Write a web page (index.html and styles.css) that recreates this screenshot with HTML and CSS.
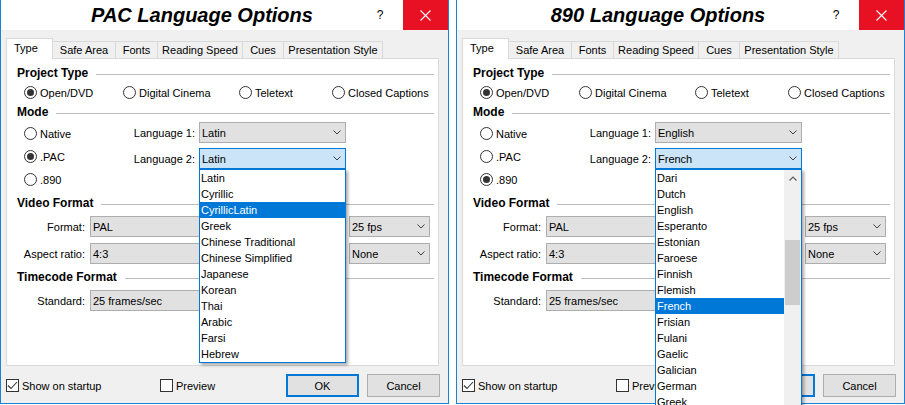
FILE: index.html
```html
<!DOCTYPE html>
<html>
<head>
<meta charset="utf-8">
<title>Language Options</title>
<link rel="stylesheet" href="styles.css">
</head>
<body>
<div class="screen">

  <!-- ===== PAC dialog ===== -->
  <div class="dialog">
    <div class="titlebar">
      <div class="tb-spacer"></div>
      <div class="tb-title">PAC Language Options</div>
      <div class="tb-help">?</div>
      <div class="tb-close"><svg width="11" height="11" viewBox="0 0 11 11"><path d="M0.5 0.5 L10.5 10.5 M10.5 0.5 L0.5 10.5" stroke="#fff" stroke-width="1.1" fill="none"/></svg></div>
    </div>
    <div class="dlg-body">
      <div class="tabs">
        <div class="tab tab-sel">Type</div>
        <div class="tab">Safe Area</div>
        <div class="tab">Fonts</div>
        <div class="tab">Reading Speed</div>
        <div class="tab">Cues</div>
        <div class="tab">Presentation Style</div>
      </div>
      <div class="panel">
        <div class="group-hd"><span>Project Type</span><i class="rule"></i></div>
        <div class="radio-row">
          <div class="radio r-open on"><span class="rb"></span>Open/DVD</div>
          <div class="radio r-dc"><span class="rb"></span>Digital Cinema</div>
          <div class="radio r-tt"><span class="rb"></span>Teletext</div>
          <div class="radio"><span class="rb"></span>Closed Captions</div>
        </div>
        <div class="group-hd"><span>Mode</span><i class="rule"></i></div>
        <div class="mode">
          <div class="mode-radios">
            <div class="radio"><span class="rb"></span>Native</div>
            <div class="radio on"><span class="rb"></span>.PAC</div>
            <div class="radio"><span class="rb"></span>.890</div>
          </div>
          <div class="mode-langs">
            <span class="lbl">Language 1:</span>
            <div class="combo"><span>Latin</span><svg class="chev" width="8" height="5" viewBox="0 0 8 5"><path d="M0.5 0.5 L4 4 L7.5 0.5" fill="none" stroke="#404040"/></svg></div>
            <span class="lbl">Language 2:</span>
            <div class="combo-wrap">
              <div class="combo focus"><span>Latin</span><svg class="chev" width="8" height="5" viewBox="0 0 8 5"><path d="M0.5 0.5 L4 4 L7.5 0.5" fill="none" stroke="#404040"/></svg></div>
              <div class="list">
                <div class="li">Latin</div>
                <div class="li">Cyrillic</div>
                <div class="li sel">CyrillicLatin</div>
                <div class="li">Greek</div>
                <div class="li">Chinese Traditional</div>
                <div class="li">Chinese Simplified</div>
                <div class="li">Japanese</div>
                <div class="li">Korean</div>
                <div class="li">Thai</div>
                <div class="li">Arabic</div>
                <div class="li">Farsi</div>
                <div class="li">Hebrew</div>
              </div>
            </div>
          </div>
        </div>
        <div class="group-hd"><span>Video Format</span><i class="rule"></i></div>
        <div class="vrow">
          <span class="lbl">Format:</span>
          <div class="combo"><span>PAL</span><svg class="chev" width="8" height="5" viewBox="0 0 8 5"><path d="M0.5 0.5 L4 4 L7.5 0.5" fill="none" stroke="#404040"/></svg></div>
          <div class="combo"><span>25 fps</span><svg class="chev" width="8" height="5" viewBox="0 0 8 5"><path d="M0.5 0.5 L4 4 L7.5 0.5" fill="none" stroke="#404040"/></svg></div>
        </div>
        <div class="vrow vrow2">
          <span class="lbl">Aspect ratio:</span>
          <div class="combo"><span>4:3</span><svg class="chev" width="8" height="5" viewBox="0 0 8 5"><path d="M0.5 0.5 L4 4 L7.5 0.5" fill="none" stroke="#404040"/></svg></div>
          <div class="combo"><span>None</span><svg class="chev" width="8" height="5" viewBox="0 0 8 5"><path d="M0.5 0.5 L4 4 L7.5 0.5" fill="none" stroke="#404040"/></svg></div>
        </div>
        <div class="group-hd gh-tc"><span>Timecode Format</span><i class="rule"></i></div>
        <div class="vrow">
          <span class="lbl">Standard:</span>
          <div class="combo"><span>25 frames/sec</span><svg class="chev" width="8" height="5" viewBox="0 0 8 5"><path d="M0.5 0.5 L4 4 L7.5 0.5" fill="none" stroke="#404040"/></svg></div>
        </div>
      </div>
      <div class="footer">
        <div class="chk chk-first"><span class="cb"><svg width="11" height="11" viewBox="0 0 11 11"><path d="M1 5.5 L4 8.5 L10 2" fill="none" stroke="#333" stroke-width="1.1"/></svg></span>Show on startup</div>
        <div class="chk"><span class="cb"></span>Preview</div>
        <div class="buttons">
          <div class="btn default">OK</div>
          <div class="btn">Cancel</div>
        </div>
      </div>
    </div>
  </div>

  <!-- ===== 890 dialog ===== -->
  <div class="dialog">
    <div class="titlebar">
      <div class="tb-spacer"></div>
      <div class="tb-title">890 Language Options</div>
      <div class="tb-help">?</div>
      <div class="tb-close"><svg width="11" height="11" viewBox="0 0 11 11"><path d="M0.5 0.5 L10.5 10.5 M10.5 0.5 L0.5 10.5" stroke="#fff" stroke-width="1.1" fill="none"/></svg></div>
    </div>
    <div class="dlg-body">
      <div class="tabs">
        <div class="tab tab-sel">Type</div>
        <div class="tab">Safe Area</div>
        <div class="tab">Fonts</div>
        <div class="tab">Reading Speed</div>
        <div class="tab">Cues</div>
        <div class="tab">Presentation Style</div>
      </div>
      <div class="panel">
        <div class="group-hd"><span>Project Type</span><i class="rule"></i></div>
        <div class="radio-row">
          <div class="radio r-open on"><span class="rb"></span>Open/DVD</div>
          <div class="radio r-dc"><span class="rb"></span>Digital Cinema</div>
          <div class="radio r-tt"><span class="rb"></span>Teletext</div>
          <div class="radio"><span class="rb"></span>Closed Captions</div>
        </div>
        <div class="group-hd"><span>Mode</span><i class="rule"></i></div>
        <div class="mode">
          <div class="mode-radios">
            <div class="radio"><span class="rb"></span>Native</div>
            <div class="radio"><span class="rb"></span>.PAC</div>
            <div class="radio on"><span class="rb"></span>.890</div>
          </div>
          <div class="mode-langs">
            <span class="lbl">Language 1:</span>
            <div class="combo"><span>English</span><svg class="chev" width="8" height="5" viewBox="0 0 8 5"><path d="M0.5 0.5 L4 4 L7.5 0.5" fill="none" stroke="#404040"/></svg></div>
            <span class="lbl">Language 2:</span>
            <div class="combo-wrap">
              <div class="combo focus"><span>French</span><svg class="chev" width="8" height="5" viewBox="0 0 8 5"><path d="M0.5 0.5 L4 4 L7.5 0.5" fill="none" stroke="#404040"/></svg></div>
              <div class="list list-scroll">
                <div class="items">
                  <div class="li">Dari</div>
                  <div class="li">Dutch</div>
                  <div class="li">English</div>
                  <div class="li">Esperanto</div>
                  <div class="li">Estonian</div>
                  <div class="li">Faroese</div>
                  <div class="li">Finnish</div>
                  <div class="li">Flemish</div>
                  <div class="li sel">French</div>
                  <div class="li">Frisian</div>
                  <div class="li">Fulani</div>
                  <div class="li">Gaelic</div>
                  <div class="li">Galician</div>
                  <div class="li">German</div>
                  <div class="li">Greek</div>
                  <div class="li">Gujarati</div>
                </div>
                <div class="sb">
                  <div class="sb-up"><svg width="8" height="5" viewBox="0 0 8 5"><path d="M0.5 4.5 L4 1 L7.5 4.5" fill="none" stroke="#606060" stroke-width="1.2"/></svg></div>
                  <div class="sb-thumb"></div>
                </div>
              </div>
            </div>
          </div>
        </div>
        <div class="group-hd"><span>Video Format</span><i class="rule"></i></div>
        <div class="vrow">
          <span class="lbl">Format:</span>
          <div class="combo"><span>PAL</span><svg class="chev" width="8" height="5" viewBox="0 0 8 5"><path d="M0.5 0.5 L4 4 L7.5 0.5" fill="none" stroke="#404040"/></svg></div>
          <div class="combo"><span>25 fps</span><svg class="chev" width="8" height="5" viewBox="0 0 8 5"><path d="M0.5 0.5 L4 4 L7.5 0.5" fill="none" stroke="#404040"/></svg></div>
        </div>
        <div class="vrow vrow2">
          <span class="lbl">Aspect ratio:</span>
          <div class="combo"><span>4:3</span><svg class="chev" width="8" height="5" viewBox="0 0 8 5"><path d="M0.5 0.5 L4 4 L7.5 0.5" fill="none" stroke="#404040"/></svg></div>
          <div class="combo"><span>None</span><svg class="chev" width="8" height="5" viewBox="0 0 8 5"><path d="M0.5 0.5 L4 4 L7.5 0.5" fill="none" stroke="#404040"/></svg></div>
        </div>
        <div class="group-hd gh-tc"><span>Timecode Format</span><i class="rule"></i></div>
        <div class="vrow">
          <span class="lbl">Standard:</span>
          <div class="combo"><span>25 frames/sec</span><svg class="chev" width="8" height="5" viewBox="0 0 8 5"><path d="M0.5 0.5 L4 4 L7.5 0.5" fill="none" stroke="#404040"/></svg></div>
        </div>
      </div>
      <div class="footer">
        <div class="chk chk-first"><span class="cb"><svg width="11" height="11" viewBox="0 0 11 11"><path d="M1 5.5 L4 8.5 L10 2" fill="none" stroke="#333" stroke-width="1.1"/></svg></span>Show on startup</div>
        <div class="chk"><span class="cb"></span>Preview</div>
        <div class="buttons">
          <div class="btn default">OK</div>
          <div class="btn">Cancel</div>
        </div>
      </div>
    </div>
  </div>

</div>
</body>
</html>
```

FILE: styles.css
```css
* { box-sizing: border-box; }
html, body { margin: 0; padding: 0; background: #fff; overflow: hidden; }
body {
  font-family: "Liberation Sans", Arial, sans-serif;
  font-size: 11px;
  color: #000;
}
.screen {
  display: flex;
  gap: 7px;
  width: 905px;
  height: 405px;
  overflow: hidden;
}
.dialog {
  width: 449px;
  height: 404px;
  flex: none;
  border: 1px solid #1883d7;
  border-top: none;
  background: #f0f0f0;
  display: flex;
  flex-direction: column;
}
.titlebar {
  height: 30px;
  flex: none;
  display: flex;
  background: #fff;
}
.tb-spacer { width: 46px; flex: none; }
.tb-title {
  flex: 1;
  text-align: center;
  font-size: 20px;
  font-weight: bold;
  font-style: italic;
  line-height: 30px;
  white-space: nowrap;
}
.tb-help {
  width: 46px;
  flex: none;
  text-align: center;
  font-size: 12px;
  line-height: 30px;
}
.tb-close {
  width: 45px;
  flex: none;
  background: #e81123;
  display: flex;
  align-items: center;
  justify-content: center;
}
.tb-close svg { display: block; }

.dlg-body {
  flex: 1;
  padding: 8px 9px 6px 5px;
  display: flex;
  flex-direction: column;
}

/* tabs */
.tabs {
  display: flex;
  align-items: flex-end;
  height: 20px;
  flex: none;
}
.tab {
  height: 17px;
  line-height: 16px;
  border: 1px solid #d9d9d9;
  border-bottom: none;
  margin-left: -1px;
  text-align: center;
  background: #f0f0f0;
  white-space: nowrap;
}
.tab:nth-child(1) { width: 47px; }
.tab:nth-child(2) { width: 64px; }
.tab:nth-child(3) { width: 43px; }
.tab:nth-child(4) { width: 86px; }
.tab:nth-child(5) { width: 42px; }
.tab:nth-child(6) { width: 100px; }
.tab-sel {
  height: 21px;
  line-height: 19px;
  margin-left: 0;
  margin-bottom: -1px;
  background: #fff;
  position: relative;
  z-index: 1;
  text-align: left;
  padding-left: 7px;
}

/* panel */
.panel {
  height: 308px;
  flex: none;
  border: 1px solid #d9d9d9;
  background: #fff;
  padding: 6px 4px 0 10px;
}
.group-hd {
  display: flex;
  height: 16px;
  line-height: 16px;
  font-size: 12px;
  font-weight: bold;
  white-space: nowrap;
}
.rule {
  flex: 1;
  height: 1px;
  background: #bcbcbc;
  margin: 9px 0 0 8px;
}
.gh-tc { margin-top: 5px; }

.radio {
  display: flex;
  align-items: center;
  white-space: nowrap;
}
.rb {
  width: 13px;
  height: 13px;
  flex: none;
  border: 1px solid #333;
  border-radius: 50%;
  margin-right: 3px;
  display: flex;
  align-items: center;
  justify-content: center;
  background: #fff;
}
.on .rb::after {
  content: "";
  width: 7px;
  height: 7px;
  border-radius: 50%;
  background: #333;
}
.radio-row {
  display: flex;
  height: 23px;
  padding-left: 7px;
}
.r-open { width: 99px; }
.r-dc { width: 116px; }
.r-tt { width: 93px; }

.mode {
  display: flex;
  height: 75px;
}
.mode-radios {
  width: 90px;
  margin-left: 7px;
  padding-top: 2px;
  flex: none;
}
.mode-radios .radio { height: 23px; }
.mode-langs {
  display: grid;
  grid-template-columns: 81px 147px;
  column-gap: 4px;
  row-gap: 5px;
  padding-top: 2px;
  align-content: start;
}
.lbl {
  text-align: right;
  align-self: center;
  white-space: nowrap;
}

.combo {
  height: 21px;
  border: 1px solid #adadad;
  background: #e1e1e1;
  display: flex;
  align-items: center;
  justify-content: space-between;
  padding: 0 4px 0 2px;
  white-space: nowrap;
}
.combo .chev { display: block; flex: none; }
.combo.focus {
  border-color: #0078d7;
  background: #cce4f7;
}
.combo-wrap { position: relative; }

.list {
  position: absolute;
  left: 0;
  top: 21px;
  width: 147px;
  border: 1px solid #0078d7;
  background: #fff;
  box-shadow: 2px 2px 3px rgba(0, 0, 0, 0.35);
  z-index: 10;
}
.li {
  height: 16px;
  line-height: 16px;
  padding-left: 1px;
  white-space: nowrap;
}
.li.sel {
  background: #0078d7;
  color: #fff;
}
.list-scroll {
  display: flex;
  height: 250px;
}
.items { flex: 1; overflow: hidden; }
.sb {
  width: 17px;
  flex: none;
  background: #f0f0f0;
  display: flex;
  flex-direction: column;
}
.sb-up {
  height: 16px;
  display: flex;
  align-items: center;
  justify-content: center;
}
.sb-up svg { display: block; }
.sb-thumb {
  margin: 54px 1px 0 1px;
  height: 65px;
  background: #cdcdcd;
}

.vrow {
  display: grid;
  grid-template-columns: 68px 254px 81px;
  column-gap: 5px;
  height: 21px;
  margin-top: 5px;
}
.vrow2 { margin-top: 6px; }

/* footer */
.footer {
  display: flex;
  align-items: center;
  height: 23px;
  margin-top: 8px;
  flex: none;
}
.chk {
  display: flex;
  align-items: center;
  white-space: nowrap;
}
.chk-first { width: 154px; }
.cb {
  width: 13px;
  height: 13px;
  flex: none;
  border: 1px solid #333;
  background: #fff;
  margin-right: 3px;
  display: flex;
  align-items: center;
  justify-content: center;
}
.cb svg { display: block; }
.buttons {
  margin-left: auto;
  margin-right: -1px;
  display: flex;
  gap: 8px;
}
.btn {
  width: 73px;
  height: 23px;
  border: 1px solid #adadad;
  background: #e1e1e1;
  display: flex;
  align-items: center;
  justify-content: center;
}
.btn.default { border: 2px solid #0078d7; }
```
